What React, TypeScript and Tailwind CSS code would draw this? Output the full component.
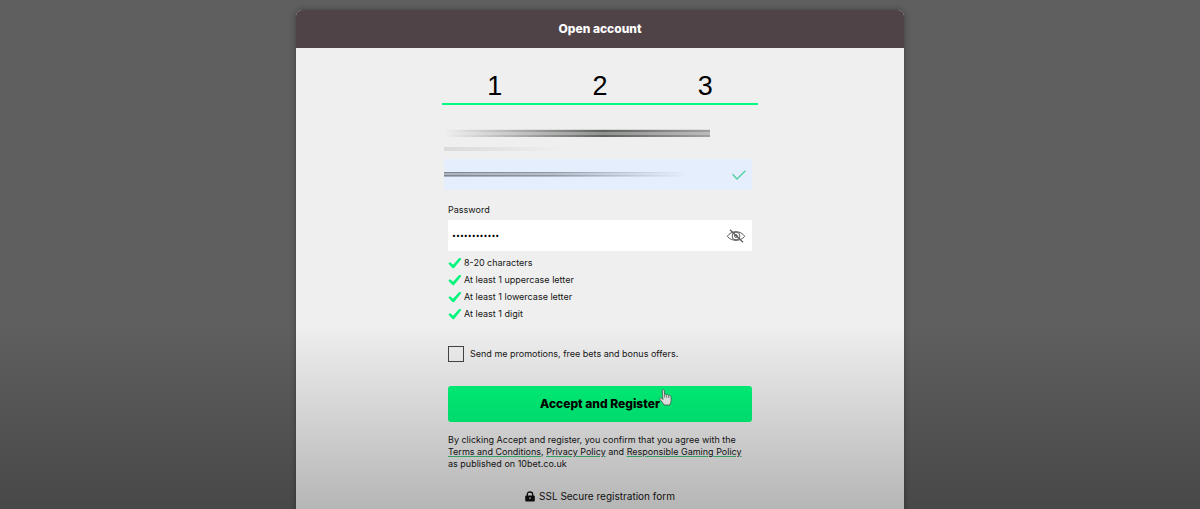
import { useState } from 'react'
import type { FormEvent } from 'react'

const steps = [1, 2, 3]

const passwordRules = [
  '8-20 characters',
  'At least 1 uppercase letter',
  'At least 1 lowercase letter',
  'At least 1 digit',
]

const linkClass = 'underline decoration-[#3fbf7c] decoration-1 underline-offset-1'

function RuleCheck() {
  return (
    <svg viewBox="0 0 14 12" className="h-3 w-3.5 shrink-0" aria-hidden="true">
      <path
        d="M.4 6.6 C.9 5.4 2.2 5 3.1 5.9 L5.1 7.8 L10.7 1.6 C11.5 .8 12.9 1 13.3 2.1 L6.3 10.7 C5.7 11.4 4.8 11.4 4.2 10.8 Z"
        fill="#00f57b"
      />
    </svg>
  )
}

function HiddenEye() {
  return (
    <svg viewBox="0 0 20 14" className="h-3.5 w-5" fill="none" stroke="#5c5c5c" aria-hidden="true">
      <path d="M1.3 7.3 C5.5 1.1 14.5 1.1 18.7 7.3 C14.5 12.7 5.5 12.7 1.3 7.3 Z" />
      <circle cx="10" cy="7" r="3.9" />
      <circle cx="10" cy="7" r="1.4" />
      <path d="M4 .7 L17 13.2" strokeWidth="1.2" />
    </svg>
  )
}

function HandCursor() {
  return (
    <svg viewBox="0 0 13 17" className="h-[17px] w-[13px]" aria-hidden="true">
      <path
        d="M3.2 1.6 C3.2 .2 5.2 .2 5.3 1.6 L5.6 5.6 C6.2 4.8 7.4 5.1 7.6 6 C8.3 5.2 9.5 5.6 9.7 6.5 C10.8 6 11.9 6.7 12 8 L12.1 11.4 C12 13.6 11.2 14.4 10.9 16 L5 16 C4.4 14 2.4 12.6 1 10.4 C.3 9.1 1.7 8.4 2.5 9.1 L3.9 10.5 Z"
        fill="#f4f4f4"
        stroke="#4b5a50"
        strokeWidth=".8"
        strokeLinejoin="round"
      />
      <path d="M5.6 5.6 V8.6 M7.6 6.2 V8.8 M9.7 6.8 V9" stroke="#4b5a50" strokeWidth=".7" />
    </svg>
  )
}

function Padlock() {
  return (
    <svg viewBox="0 0 10 11" className="h-[11px] w-2.5" aria-hidden="true">
      <path d="M2.3 5 V3.4 C2.3 .2 7.7 .2 7.7 3.4 V5" fill="none" stroke="#111" strokeWidth="1.3" />
      <rect x=".2" y="4.4" width="9.6" height="6.2" rx="1" fill="#111" />
      <circle cx="5" cy="7.2" r=".9" fill="#c4c4c4" />
    </svg>
  )
}

export default function App() {
  const [password, setPassword] = useState('Welcome12345')
  const [visible, setVisible] = useState(false)

  const handleSubmit = (e: FormEvent) => e.preventDefault()

  return (
    <div className="relative flex h-screen justify-center overflow-hidden bg-[#5f5f5f] px-4 pt-2.5 font-['Inter',sans-serif] text-[#151515]">
      <main className="h-max w-full max-w-[608px] overflow-hidden rounded-t-md bg-[#efefef] pb-8 shadow-[0_0_6px_rgba(0,0,0,0.35)]">
        <header className="flex h-[38px] items-center justify-center bg-[#504347]">
          <h1 className="text-xs font-extrabold text-white">Open account</h1>
        </header>

        <form onSubmit={handleSubmit} className="mx-auto w-full max-w-[304px] pt-5">
          <ol className="-mx-1.5 grid h-[37px] grid-cols-3 items-center border-b-2 border-[#00fa82] text-center font-['Liberation_Sans',sans-serif] text-[27px] leading-9 text-black">
            {steps.map((step) => (
              <li key={step}>{step}</li>
            ))}
          </ol>

          <div className="-ml-1 pt-6">
            <div className="h-2 w-[266px] bg-linear-to-r from-transparent via-[#5f625f] via-60% to-[#a0a0a0]">
              <div className="h-full bg-[linear-gradient(to_bottom,rgba(239,239,239,0.8)_0_1px,transparent_1px_3px,rgba(239,239,239,0.35)_3px_6px,transparent_6px)]" />
            </div>
            <div className="mt-2.5 h-1 w-[120px] bg-linear-to-r from-[#dadada] to-transparent" />
            <div className="relative mt-2 flex h-[31px] items-center">
              <input
                type="email"
                aria-label="Email"
                className="h-full w-full bg-[#e4eefd] px-2 text-[9px] outline-none"
              />
              <div className="pointer-events-none absolute left-0 h-[5px] w-[245px] bg-linear-to-r from-[#7f858f] via-[#9299a5] via-45% to-transparent">
                <div className="h-full bg-[linear-gradient(to_bottom,transparent_0_1px,rgba(228,238,253,0.45)_1px_3px,transparent_3px_4px,rgba(228,238,253,0.4)_4px)]" />
              </div>
              <svg
                viewBox="0 0 14 10"
                className="pointer-events-none absolute right-1.5 h-2.5 w-3.5"
                fill="none"
                aria-hidden="true"
              >
                <path d="M.6 4.2 L5 9 L13.4 .8" stroke="#4fd09c" strokeWidth="1.3" />
              </svg>
            </div>
          </div>

          <label htmlFor="password" className="mt-3 mb-0.5 block text-[9px] leading-4">
            Password
          </label>
          <div className="relative flex h-[31px] items-center">
            <input
              id="password"
              type={visible ? 'text' : 'password'}
              value={password}
              onChange={(e) => setPassword(e.target.value)}
              className="h-full w-full bg-white pr-8 pl-1 text-[7px] text-black outline-none"
            />
            <button
              type="button"
              aria-label="Show password"
              onClick={() => setVisible(!visible)}
              className="absolute right-1.5"
            >
              <HiddenEye />
            </button>
          </div>

          <ul className="pt-[3px] text-[9px] leading-[17px]">
            {passwordRules.map((rule) => (
              <li key={rule} className="flex items-center gap-0.5">
                <RuleCheck />
                {rule}
              </li>
            ))}
          </ul>

          <label className="mt-6 flex items-center gap-1.5 text-[9px] leading-4">
            <input
              type="checkbox"
              className="size-4 shrink-0 appearance-none border border-[#444] checked:bg-[#00fa82]"
            />
            Send me promotions, free bets and bonus offers.
          </label>

          <button
            type="submit"
            className="relative mt-6 h-9 w-full rounded-[3px] bg-[#00fa7c] text-xs font-extrabold text-black"
          >
            Accept and Register
            <span className="absolute top-[3px] right-20">
              <HandCursor />
            </span>
          </button>

          <p className="mt-3 text-[9px] leading-3">
            By clicking Accept and register, you confirm that you agree with the{' '}
            <a href="#terms" className={linkClass}>Terms and Conditions</a>,{' '}
            <a href="#privacy" className={linkClass}>Privacy Policy</a> and{' '}
            <a href="#gaming" className={linkClass}>Responsible Gaming Policy</a>
            <br />
            as published on 10bet.co.uk
          </p>

          <p className="mt-4 flex items-center justify-center gap-1 text-[10px] leading-5">
            <Padlock />
            SSL Secure registration form
          </p>
        </form>
      </main>

      <div className="pointer-events-none absolute inset-x-0 bottom-0 h-[184px] bg-linear-to-b from-transparent to-black/24" />
    </div>
  )
}
